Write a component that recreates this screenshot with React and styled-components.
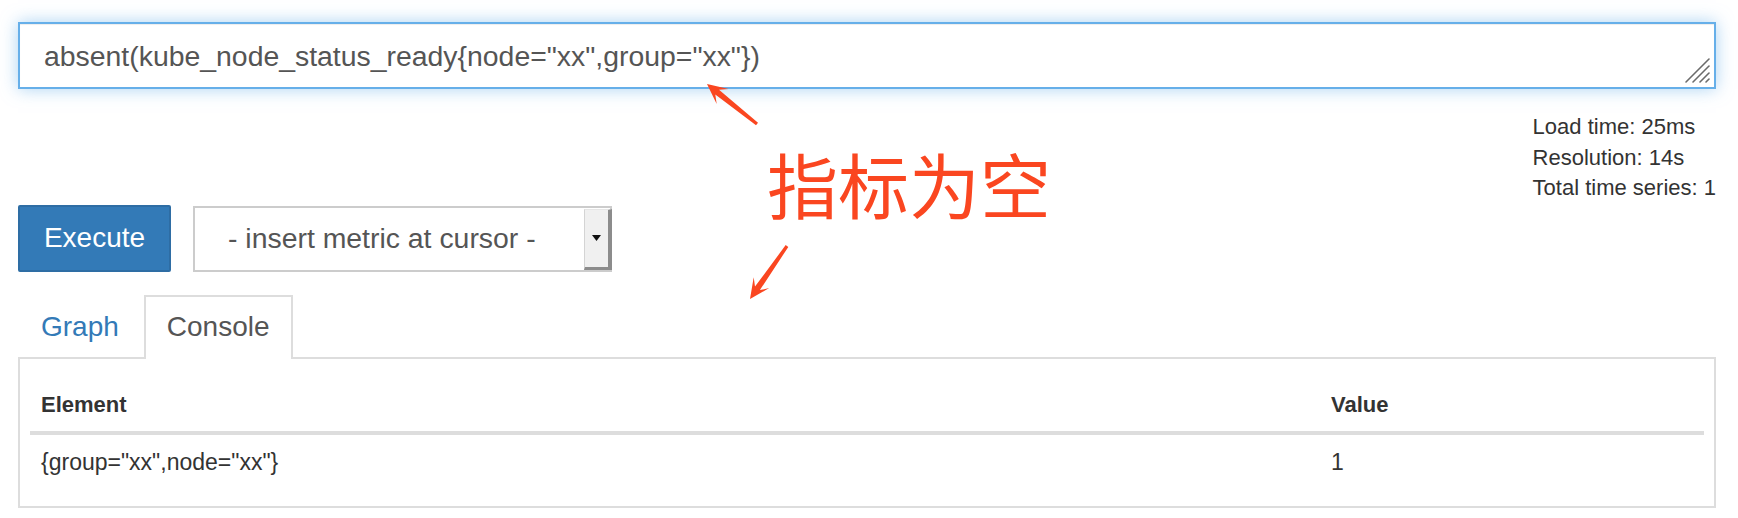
import React from 'react'
import styled, { createGlobalStyle } from 'styled-components'

const GlobalStyle = createGlobalStyle`
    * {
        box-sizing: border-box;
    }
    body {
        margin: 0;
        background: #fff;
        font-family: "Liberation Sans", Arial, sans-serif;
        color: #333;
    }
`

const Page = styled.div`
    position: relative;
    width: 1738px;
    height: 518px;
    padding: 22px 22px 0 18px;
    overflow: hidden;
`

const ExpressionBox = styled.div`
    position: relative;
    height: 67px;
    border: 2px solid #66afe9;
    box-shadow: inset 0 1px 1px rgba(0, 0, 0, 0.075), 0 0 16px rgba(102, 175, 233, 0.55);
    padding: 2px 24px 0;
    display: flex;
    align-items: center;
    font-size: 28.4px;
    color: #555;
    background: #fff;
    white-space: pre;
`

const Grip = styled.svg`
    position: absolute;
    right: 2px;
    bottom: 2px;
`

const StatsRow = styled.div`
    display: flex;
    justify-content: flex-end;
    margin-top: 23px;
`

const Stats = styled.div`
    font-size: 22px;
    line-height: 30.5px;
    color: #333;
`

const Controls = styled.div`
    display: flex;
    align-items: flex-start;
    gap: 22px;
    margin-top: 1px;
`

const ExecuteButton = styled.button`
    width: 153px;
    height: 67px;
    background: #337ab7;
    border: 2px solid #2e6da4;
    border-radius: 2px;
    color: #fff;
    font-family: inherit;
    font-size: 28px;
    padding: 0;
`

const MetricSelect = styled.div`
    width: 419px;
    height: 66px;
    margin-top: 1px;
    border: 2px solid #ccc;
    background: #fff;
    display: flex;
    align-items: stretch;
    justify-content: space-between;
`

const SelectLabel = styled.span`
    padding-left: 33px;
    align-self: center;
    font-size: 28.4px;
    color: #555;
    white-space: pre;
`

const SelectArrow = styled.span`
    width: 28px;
    margin: 1px -2px 0 0;
    background: #f0f0f0;
    border-style: solid;
    border-width: 1px 4px 3px 1px;
    border-color: #e6e6e6 #8c8c8c #8c8c8c #d4d4d4;
    display: flex;
    align-items: center;
    justify-content: center;
`

const Tabs = styled.div`
    display: flex;
    gap: 2px;
    margin-top: 23px;
`

const Tab = styled.div`
    position: relative;
    z-index: 1;
    font-size: 28px;
    line-height: 40px;
    padding: 10px 21px 12px;
    margin-bottom: -2px;
    border: 2px solid ${props => props.$active ? '#ddd' : 'transparent'};
    border-bottom: 0;
    background: ${props => props.$active ? '#fff' : 'transparent'};
    color: ${props => props.$active ? '#555' : '#337ab7'};
`

const Panel = styled.div`
    border: 2px solid #ddd;
    padding: 21px 10px 18px;
`

const Table = styled.table`
    width: 100%;
    border-collapse: collapse;
    font-size: 22px;
    line-height: 30px;
    color: #333;
`

const HeadCell = styled.th`
    text-align: left;
    font-weight: bold;
    padding: 10px 11px 11px;
    border-bottom: 4px solid #ddd;
    width: ${props => props.$width || 'auto'};
`

const Cell = styled.td`
    padding: 12px 11px 11px;
    font-size: 23px;
`

const Note = styled.div`
    position: absolute;
    left: 767px;
    top: 147px;
    font-family: "Noto Sans CJK SC", sans-serif;
    font-size: 71px;
    line-height: 1;
    color: #fa4620;
`

const Overlay = styled.svg`
    position: absolute;
    left: 0;
    top: 0;
    pointer-events: none;
`

const arrowPoints = (tail, tip) => {
    const dx = tip[0] - tail[0]
    const dy = tip[1] - tail[1]
    const len = Math.hypot(dx, dy)
    const u = [dx / len, dy / len]
    const n = [-u[1], u[0]]
    const at = (base, along, side) => [
        base[0] + u[0] * along + n[0] * side,
        base[1] + u[1] * along + n[1] * side,
    ]
    const pts = [
        at(tail, 0, 1.6),
        at(tip, -13, 3),
        at(tip, -20, 9.5),
        tip,
        at(tip, -20, -9.5),
        at(tip, -13, -3),
        at(tail, 0, -1.6),
    ]
    return pts.map(p => p[0].toFixed(1) + ',' + p[1].toFixed(1)).join(' ')
}

const Arrow = ({ tail, tip }) => (
    <polygon points={arrowPoints(tail, tip)} fill="#fa4620" />
)

const App = () => {
    return (
        <Page>
            <GlobalStyle />
            <ExpressionBox>
                {'absent(kube_node_status_ready{node="xx",group="xx"})'}
                <Grip width="30" height="30" viewBox="0 0 30 30">
                    <g stroke="#6b6b6b" strokeWidth="1.6" strokeLinecap="round">
                        <line x1="27" y1="4" x2="4" y2="27" />
                        <line x1="27" y1="11" x2="11" y2="27" />
                        <line x1="27" y1="18" x2="18" y2="27" />
                        <line x1="27" y1="24" x2="24" y2="27" />
                    </g>
                </Grip>
            </ExpressionBox>
            <StatsRow>
                <Stats>
                    <div>Load time: 25ms</div>
                    <div>Resolution: 14s</div>
                    <div>Total time series: 1</div>
                </Stats>
            </StatsRow>
            <Controls>
                <ExecuteButton>Execute</ExecuteButton>
                <MetricSelect>
                    <SelectLabel>- insert metric at cursor -</SelectLabel>
                    <SelectArrow>
                        <svg width="9" height="6" viewBox="0 0 9 6">
                            <path d="M0 0 H9 L4.5 6 Z" fill="#111" />
                        </svg>
                    </SelectArrow>
                </MetricSelect>
            </Controls>
            <Tabs>
                <Tab>Graph</Tab>
                <Tab $active>Console</Tab>
            </Tabs>
            <Panel>
                <Table>
                    <thead>
                        <tr>
                            <HeadCell>Element</HeadCell>
                            <HeadCell $width="384px">Value</HeadCell>
                        </tr>
                    </thead>
                    <tbody>
                        <tr>
                            <Cell>{'{group="xx",node="xx"}'}</Cell>
                            <Cell>1</Cell>
                        </tr>
                    </tbody>
                </Table>
            </Panel>
            <Note>指标为空</Note>
            <Overlay width="1738" height="518" viewBox="0 0 1738 518">
                <Arrow tail={[757, 124]} tip={[707, 84]} />
                <Arrow tail={[787, 246]} tip={[750, 299]} />
            </Overlay>
        </Page>
    )
}

export default App
